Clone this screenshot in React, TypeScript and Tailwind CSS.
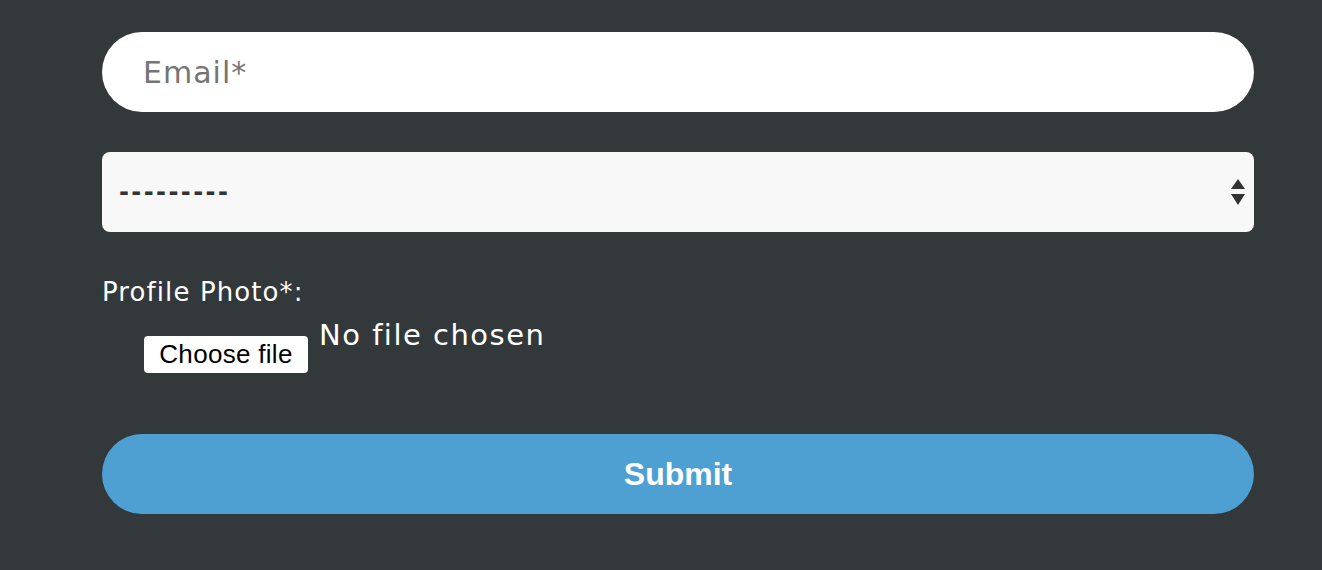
import React from "react";

export default function App() {
  return (
    <div className="w-[1322px] h-[570px] bg-[#33383b] overflow-hidden">
      <div className="ml-[102px] w-[1152px] pt-[32px] flex flex-col font-['DejaVu_Sans','Open_Sans',sans-serif]">
        <div className="h-[80px] rounded-full bg-white flex items-center pl-[41px]">
          <span className="text-[30px] text-[#757575] tracking-[1px]">Email*</span>
        </div>
        <div className="mt-[40px] h-[80px] rounded-[8px] bg-[#f8f8f8] flex items-center pl-[17px] pr-[8px]">
          <span className="text-[24px] font-bold text-[#333] tracking-[2.4px] flex-1">---------</span>
          <svg width="16" height="30" viewBox="0 0 16 30">
            <polygon points="8,2 15,12 1,12" fill="#333" />
            <polygon points="1,17 15,17 8,28" fill="#333" />
          </svg>
        </div>
        <div className="mt-[43px] text-[26px] leading-[34px] text-white tracking-[1.1px]">Profile Photo*:</div>
        <div className="flex items-start ml-[42px] mt-[8px]">
          <div className="mt-[19px] h-[37px] w-[164px] bg-white rounded-[4px] flex items-center justify-center text-[26px] text-black tracking-[0.3px] font-['Liberation_Sans',Arial,sans-serif]">
            Choose file
          </div>
          <span className="ml-[11px] text-[29px] leading-[36px] text-white tracking-[1.5px]">No file chosen</span>
        </div>
        <div className="mt-[61px] h-[80px] rounded-full bg-[#4ea0d3] flex items-center justify-center text-[32px] font-bold text-white font-['Liberation_Sans',Arial,sans-serif]">
          Submit
        </div>
      </div>
    </div>
  );
}
